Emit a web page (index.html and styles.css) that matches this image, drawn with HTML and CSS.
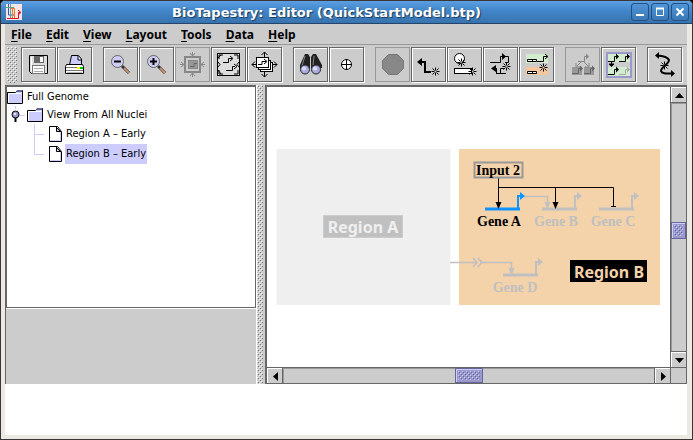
FILE: index.html
```html
<!DOCTYPE html>
<html lang="en">
<head>
    <meta charset="UTF-8">
    <meta name="viewport" content="width=device-width, initial-scale=1.0">
    <title>BioTapestry: Editor (QuickStartModel.btp)</title>
    <link rel="stylesheet" href="styles.css">
</head>
<body>
    <!-- shared shapes -->
    <svg class="defs" width="0" height="0">
        <defs>
            <path id="star" d="M0-4V-1M0 1V4M-4 0H-1M1 0H4M-3-3L-1-1M1 1L3 3M3-3L1-1M-1 1L-3 3" fill="none" stroke="#000"/>
            <g id="gene">
                <path d="M0 8.500H6.500V3.500H9" fill="none" stroke="currentColor"/>
                <path d="M8 .5L11 3.500L8 6.500Z" fill="currentColor"/>
            </g>
            <g id="bigGene">
                <path d="M0 17H35" fill="none" stroke="currentColor" stroke-width="3"/>
                <path d="M33 17V4H37" fill="none" stroke="currentColor" stroke-width="2"/>
                <path d="M35 0L40 4L35 8Z" fill="currentColor"/>
            </g>
            <path id="down" d="M-3-6H3L0 1Z"/>
            <g id="folder">
                <path d="M.5 14.500V3.500H8.500L10.500 1.500H15.500V14.500Z" fill="#ccccff" stroke="#000"/>
                <path d="M9 3H15V1H10Z" fill="#666699"/>
                <path d="M1.500 13.500V4.500H14.500" fill="none" stroke="#fff"/>
            </g>
            <g id="sheet">
                <path d="M.5.5H8.500L12.500 5.500V15.500H.5Z" fill="#fff" stroke="#000"/>
                <path d="M1.500 14.500H11.500V6.500" fill="none" stroke="#ccccff"/>
                <path d="M7.500 1V5.500H12" fill="#ccccff" stroke="#000"/>
                <path d="M7 1L12 6" stroke="#000"/>
            </g>
        </defs>
    </svg>
    <div class="window">
        <header class="titlebar">
            <svg class="logo" width="16" height="16" viewBox="0 0 16 16">
                <rect width="16" height="16" fill="#f4e4e8"/>
                <path d="M2.500 0V11H8" fill="none" stroke="#3355bb"/>
                <path d="M4.500 0V14M0 3.500H8" fill="none" stroke="#55aa77"/>
                <path d="M6.500 4V14M4 4.500H8.500V14" fill="none" stroke="#ee7733"/>
                <path d="M1 14.500H12.500V8.500H14M12 6L15 8.500L12 11" fill="none" stroke="#dd1122"/>
            </svg>
            <h1>BioTapestry: Editor (QuickStartModel.btp)</h1>
            <div class="win_buttons">
                <button aria-label="Minimize"><svg width="16" height="16"><path d="M4 11H12" stroke="#fff" stroke-width="2"/></svg></button>
                <button aria-label="Maximize"><svg width="16" height="16"><path d="M4.500 4V11.500H11.500V4" fill="none" stroke="#fff"/><path d="M4 4.500H12" stroke="#fff" stroke-width="2"/></svg></button>
                <button aria-label="Close"><svg width="16" height="16"><path d="M4.500 4.500L11.500 11.500M11.500 4.500L4.500 11.500" stroke="#fff" stroke-width="2"/></svg></button>
            </div>
        </header>
        <div class="frame">
            <nav class="menubar">
                <button><u>F</u>ile</button>
                <button><u>E</u>dit</button>
                <button><u>V</u>iew</button>
                <button><u>L</u>ayout</button>
                <button><u>T</u>ools</button>
                <button><u>D</u>ata</button>
                <button><u>H</u>elp</button>
            </nav>
            <div class="toolbar">
                <div class="grip"></div>
                <div class="group">
                    <button aria-label="Save"><svg viewBox="0 0 33 33">
                        <path d="M7.500 7.500H25.500V25.500H9.500L7.500 23.500Z" fill="#ddd" stroke="#000"/>
                        <rect x="12" y="8" width="10" height="7" fill="#666"/><rect x="18" y="9" width="3" height="5" fill="#fff"/>
                        <path d="M9.500 9V23" stroke="#fff"/>
                        <rect x="10.500" y="17.500" width="12" height="8" fill="#fff" stroke="#777"/>
                        <path d="M12 20.500H21M12 23.500H21" stroke="#aaa"/>
                    </svg></button>
                    <button aria-label="Print"><svg viewBox="0 0 33 33">
                        <path d="M11.500 17L13.500 7.500H20.500L23.500 11V17Z" fill="#ccccff" stroke="#000"/>
                        <path d="M20 8V12H23" fill="#fff" stroke="#000"/>
                        <path d="M8.500 16.500H24.500L25.500 18.500V25.500H7.500V18.500Z" fill="#fff" stroke="#000"/>
                        <path d="M8 19.500H25M8 22.500H25" stroke="#777"/>
                        <rect x="19" y="19" width="3" height="2" fill="#ff0"/><rect x="22" y="19" width="3" height="2" fill="#0c0"/>
                        <path d="M9 24.500H24" stroke="#bbb"/>
                    </svg></button>
                </div>
                <div class="group">
                    <button aria-label="Zoom out"><svg viewBox="0 0 33 33">
                        <path d="M18 18L25 25" stroke="#333" stroke-width="3"/><path d="M20 20L25 25" stroke="#cc9070" stroke-width="2"/>
                        <circle cx="13.500" cy="13.500" r="6" fill="#ccccf4" stroke="#666"/>
                        <path d="M10 13.500H17" stroke="#000" stroke-width="2"/>
                    </svg></button>
                    <button aria-label="Zoom in"><svg viewBox="0 0 33 33">
                        <path d="M18 18L25 25" stroke="#333" stroke-width="3"/><path d="M20 20L25 25" stroke="#cc9070" stroke-width="2"/>
                        <circle cx="13.500" cy="13.500" r="6" fill="#ccccf4" stroke="#666"/>
                        <path d="M10 13.500H17M13.500 10V17" stroke="#000" stroke-width="2"/>
                    </svg></button>
                    <button aria-label="Zoom to selection" disabled><svg viewBox="0 0 33 33" fill="none" stroke="#888">
                        <rect x="9" y="9" width="15" height="15" stroke-width="2"/>
                        <rect x="12.500" y="12.500" width="9" height="8" fill="#999"/>
                        <path d="M14 18.500H18V15.500H21" stroke="#666"/>
                        <path d="M16.500 4V8M14 5L16.500 8L19 5M16.500 29V25M14 28L16.500 25L19 28M4 16.500H8M5 14L8 16.500L5 19M29 16.500H25M28 14L25 16.500L28 19"/>
                    </svg></button>
                    <button aria-label="Zoom to model"><svg viewBox="0 0 33 33" fill="none" stroke="#000">
                        <rect x="5.500" y="5.500" width="22" height="22" fill="#ddd"/>
                        <path d="M11 14.500H16.500V10.500H20M18 8L21 10.500L18 13M14 22.500H20.500V18.500H23M22 16L25 18.500L22 21"/>
                        <path d="M6 10L9 7M7 11V7H11M22 7H26V11M6 22L9 26M7 22V26H11M22 26H26V22M6 14L8 16.500L6 19M27 14L25 16.500L27 19" />
                    </svg></button>
                    <button aria-label="Zoom to all models"><svg viewBox="0 0 33 33" fill="none" stroke="#000">
                        <path d="M16.500 4V29M4 16.500H29M13.500 7L16.500 4L19.500 7M13.500 26L16.500 29L19.500 26M7 13.500L4 16.500L7 19.500M26 13.500L29 16.500L26 19.500"/>
                        <rect x="12.500" y="14.500" width="12" height="9" fill="#fff"/>
                        <rect x="10.500" y="12.500" width="12" height="9" fill="#fff"/>
                        <rect x="8.500" y="9.500" width="12" height="10" fill="#fff"/>
                        <path d="M10 16.500H14V13.500H18M16 11L19 13.500L16 16"/>
                    </svg></button>
                </div>
                <div class="group">
                    <button aria-label="Search"><svg viewBox="0 0 33 33">
                        <path d="M11 6H14L16 9V20H6V17Z" fill="#222"/><path d="M19 6H22L28 17V20H17V9Z" fill="#222"/>
                        <path d="M11 8L8 18M20 8L19 17" stroke="#888"/>
                        <circle cx="11" cy="21.500" r="4.500" fill="#aaaadd" stroke="#222"/><circle cx="22" cy="21.500" r="4.500" fill="#aaaadd" stroke="#222"/>
                        <circle cx="10" cy="20.500" r="2" fill="#ddddff"/><circle cx="21" cy="20.500" r="2" fill="#ddddff"/>
                    </svg></button>
                    <button aria-label="Center"><svg viewBox="0 0 33 33">
                        <circle cx="16.500" cy="16.500" r="5" fill="#fff" stroke="#000"/><path d="M11 16.500H22M16.500 11V22" stroke="#000"/>
                    </svg></button>
                </div>
                <div class="group">
                    <button aria-label="Stop" disabled><svg viewBox="0 0 33 33">
                        <path d="M12.500 6.500H21.500L27.500 12.500V20.500L21.500 26.500H12.500L6.500 20.500V12.500Z" fill="#888" stroke="#777"/>
                    </svg></button>
                    <button aria-label="Add link"><svg viewBox="0 0 33 33">
                        <path d="M8 14H13V24H19" fill="none" stroke="#000" stroke-width="2"/><path d="M5 14L10 10V18Z"/>
                        <use href="#star" x="23.500" y="23.500"/>
                    </svg></button>
                    <button aria-label="Add node"><svg viewBox="0 0 33 33">
                        <circle cx="11.500" cy="10.500" r="5" fill="#fff" stroke="#000"/>
                        <rect x="6.500" y="20.500" width="17" height="5" fill="#fff" stroke="#000"/>
                        <use href="#star" x="13.500" y="14.500"/><use href="#star" x="24.500" y="23.500"/>
                    </svg></button>
                    <button aria-label="Add gene"><svg viewBox="0 0 33 33">
                        <path d="M6 14.500H16.500V8.500H24.500V14.500H21M9 20.500H13M12.500 20V26M16.500 26V20.500H20M12 25.500H22" fill="none" stroke="#000"/>
                        <path d="M18 5L22 8.500L18 12ZM12 17L7 20.500L12 24Z"/>
                        <use href="#star" x="22.500" y="18.500"/>
                    </svg></button>
                    <button aria-label="Add region"><svg viewBox="0 0 33 33">
                        <rect x="6" y="6" width="22" height="9" fill="#d2ecd0"/><rect x="6" y="19" width="22" height="8" fill="#f4c89c"/>
                        <path d="M7.500 11.500H16.500V13.500H7.500ZM12.500 11V14M7.500 23.500H16.500V25.500H7.500ZM12.500 23V26" fill="#fff" stroke="#000"/>
                        <path d="M17 13.500H23.500V8.500H27M25 6L28 8.500L25 11" fill="none" stroke="#000"/>
                        <use href="#star" x="23.500" y="19.500"/>
                    </svg></button>
                </div>
                <div class="group">
                    <button aria-label="Build hierarchy" disabled><svg viewBox="0 0 33 33">
                        <rect x="6" y="19" width="10" height="8" fill="#999"/><rect x="18" y="19" width="10" height="8" fill="#999"/>
                        <g color="#888"><use href="#gene" x="12" y="5"/></g>
                        <g color="#666"><use href="#gene" x="6" y="17"/><use href="#gene" x="18" y="17"/></g>
                        <path d="M15 14L11 18M18 14L22 18M10 15V19H14M23 15V19H19" fill="none" stroke="#888"/>
                    </svg></button>
                    <button aria-label="Pull down"><svg viewBox="0 0 33 33">
                        <rect x="5" y="5" width="24" height="24" fill="#d2ecd0" stroke="#9999cc" stroke-width="2"/>
                        <rect x="6" y="14" width="22" height="5" fill="#ccc"/>
                        <use href="#gene" x="6" y="5"/><use href="#gene" x="17" y="5"/><use href="#gene" x="6" y="18"/>
                        <g color="#aaa"><use href="#gene" x="17" y="18"/></g>
                        <path d="M9.500 14V18M7 16L9.500 18.500L12 16Z" stroke="#000"/>
                    </svg></button>
                </div>
                <div class="group">
                    <button aria-label="Relayout link"><svg viewBox="0 0 33 33">
                        <path d="M9 7.500C17 8 20 10 21 12C21 16 13 19 13 23C14 26 18 25.500 25 25.500" fill="none" stroke="#000" stroke-width="2"/>
                        <path d="M7 7.500L11 4V11ZM27 25.500L23 22V29Z"/>
                        <use href="#star" x="16.500" y="17.500"/>
                    </svg></button>
                </div>
            </div>
            <main class="workspace">
                <aside class="side">
                    <ul class="tree">
                        <li><svg width="16" height="16"><use href="#folder"/></svg><span>Full Genome</span></li>
                        <li class="open">
                            <svg width="20" height="18">
                                <path d="M8.500 0V3M12 9.500H18" stroke="#ccccff"/>
                                <path d="M8.500 11V16" stroke="#000" stroke-width="2"/>
                                <circle cx="8.500" cy="8.500" r="3.500" fill="#9999cc" stroke="#000"/><circle cx="8" cy="8" r="1" fill="#fff"/>
                            </svg>
                            <svg width="16" height="16"><use href="#folder"/></svg><span>View From All Nuclei</span>
                        </li>
                        <li class="leaf">
                            <svg width="42" height="20"><path d="M27.500 0V20M28 10.500H37" stroke="#ccccff"/></svg>
                            <svg width="13" height="16"><use href="#sheet"/></svg><span>Region A – Early</span>
                        </li>
                        <li class="leaf">
                            <svg width="42" height="20"><path d="M27.500 0V10.500H37" fill="none" stroke="#ccccff"/></svg>
                            <svg width="13" height="16"><use href="#sheet"/></svg><span class="selected">Region B – Early</span>
                        </li>
                    </ul>
                    <div class="overview"></div>
                </aside>
                <div class="divider"></div>
                <section class="view">
                    <div class="row">
                        <div class="canvas">
                            <svg width="403" height="280" viewBox="267 87 403 280">
                                <rect x="276.500" y="149" width="174" height="156" fill="#efefef"/>
                                <rect x="459" y="149" width="201" height="156" fill="#f4d2aa"/>
                                <rect x="323.500" y="215.500" width="79" height="22" fill="#c0c0c0" stroke="#ccc"/>
                                <text class="region" x="363" y="233" fill="#efefef">Region A</text>
                                <rect x="570" y="260" width="77" height="22"/>
                                <text class="region" x="609" y="278" fill="#f4d2aa">Region B</text>
                                <g color="#c0c0c0">
                                    <use href="#bigGene" x="542" y="192"/>
                                    <use href="#bigGene" x="599" y="192"/>
                                    <use href="#bigGene" x="503" y="258"/>
                                </g>
                                <g fill="none" stroke="#c0c0c0" stroke-width="1.500">
                                    <path d="M524 196.500H547.500V203M450 262.500H476M480 262.500H511.500V269M473 258L477 262.500L473 267M478 258L482 262.500L478 267"/>
                                </g>
                                <g fill="#c0c0c0"><use href="#down" x="547.500" y="208"/><use href="#down" x="511.500" y="274"/></g>
                                <g color="#0f94ff"><use href="#bigGene" x="485" y="192"/></g>
                                <path d="M498.500 178V204M498 187.500H613.500V206M555.500 187V204M611 206.500H616" fill="none" stroke="#000"/>
                                <use href="#down" x="498.500" y="208"/><use href="#down" x="555.500" y="208"/>
                                <rect x="474.500" y="162.500" width="48" height="15" fill="none" stroke="#999" stroke-width="2"/>
                                <text class="label" x="498" y="175">Input 2</text>
                                <text class="label" x="499" y="226">Gene A</text>
                                <g fill="#c0c0c0">
                                    <text class="label" x="556" y="226">Gene B</text>
                                    <text class="label" x="613" y="226">Gene C</text>
                                    <text class="label" x="515" y="292">Gene D</text>
                                </g>
                            </svg>
                        </div>
                        <div class="scroll vertical">
                            <button aria-label="Scroll up"><svg width="9" height="5"><path d="M0 5L4.500 0L9 5Z"/></svg></button>
                            <div class="track"><div class="thumb"></div></div>
                            <button aria-label="Scroll down"><svg width="9" height="5"><path d="M0 0L4.500 5L9 0Z"/></svg></button>
                        </div>
                    </div>
                    <div class="bottom">
                        <div class="scroll horizontal">
                            <button aria-label="Scroll left"><svg width="5" height="9"><path d="M5 0L0 4.500L5 9Z"/></svg></button>
                            <div class="track"><div class="thumb"></div></div>
                            <button aria-label="Scroll right"><svg width="5" height="9"><path d="M0 0L5 4.500L0 9Z"/></svg></button>
                        </div>
                        <div class="corner"></div>
                    </div>
                </section>
            </main>
            <div class="status"></div>
        </div>
    </div>
</body>
</html>
```
FILE: styles.css
```css
*{
    box-sizing: border-box;
}
body{
    margin: 0;
    font-family: "Noto Sans", sans-serif;
    font-size: 11px;
    color: #000;
    background-color: #000;
}
button{
    margin: 0;
    padding: 0;
    font: inherit;
    color: inherit;
    border: none;
    background: none;
}
svg{
    display: block;
    flex-shrink: 0;
}
.defs{
    position: absolute;
}
.window{
    height: 100vh;
    display: flex;
    flex-direction: column;
    border: 1px solid #393635;
    border-radius: 5px 5px 0 0;
    overflow: hidden;
    background-color: #ece9e2;
}
.titlebar{
    height: 23px;
    display: flex;
    align-items: center;
    padding: 0 3px 0 5px;
    background: linear-gradient(#5c9fe2, #4388cc 40%, #3873ae);
    border-bottom: 1px solid #24456b;
}
.titlebar h1{
    flex: 1;
    margin: 0;
    text-align: center;
    font: bold 13px "DejaVu Sans", sans-serif;
    color: #fff;
    text-shadow: 1px 1px 1px #1c3a5c;
}
.win_buttons{
    display: flex;
    gap: 2px;
}
.win_buttons button{
    width: 18px;
    height: 18px;
    border: 1px solid #23507f;
    border-radius: 3px;
    background: linear-gradient(#5095d8, #3a78b6);
}
.frame{
    flex: 1;
    display: flex;
    flex-direction: column;
    margin: 0 5px 4px 4px;
    background-color: #ccc;
}
.menubar{
    height: 21px;
    display: flex;
    gap: 14px;
    padding-left: 6px;
    font-size: 12px;
    font-weight: bold;
    border-bottom: 1px solid #999;
}
.menubar u{
    text-underline-offset: 2px;
}
.toolbar{
    height: 40px;
    display: flex;
    gap: 11px;
    padding: 2px 0 0 2px;
}
/* metal bumps: one light and one dark pixel, staggered */
.grip,
.divider,
.thumb{
    --light: #fff;
    --dark: #777;
    background-color: #ccc;
    background-image:
        conic-gradient(at 1px 1px, transparent 75%, var(--light) 0),
        conic-gradient(at 1px 1px, transparent 75%, var(--light) 0),
        conic-gradient(at 1px 1px, transparent 75%, var(--dark) 0),
        conic-gradient(at 1px 1px, transparent 75%, var(--dark) 0);
    background-size: 4px 4px;
    background-position: 0 0, 2px 2px, 1px 1px, 3px 3px;
}
.grip{
    width: 10px;
    height: 36px;
    margin-right: -7px;
}
.group{
    display: flex;
    gap: 1px;
}
.group button{
    width: 35px;
    height: 35px;
    border: 1px solid #666;
    box-shadow: 1px 1px #fff, inset 1px 1px #fff;
}
.group button:disabled{
    border-color: #999;
    box-shadow: none;
}
.workspace{
    flex: 1;
    display: flex;
    min-height: 0;
}
.side{
    width: 252px;
    display: flex;
    flex-direction: column;
    border-left: 1px solid #666;
    border-right: 1px solid #fff;
}
.tree{
    height: 223px;
    margin: 0;
    padding: 1px 0 0;
    list-style: none;
    font-family: "DejaVu Sans Condensed", "DejaVu Sans", sans-serif;
    background-color: #fff;
    border: 1px solid #666;
    border-top-width: 2px;
}
.tree li{
    height: 18px;
    display: flex;
    align-items: center;
}
.tree .leaf{
    height: 20px;
}
.tree span{
    line-height: 20px;
    padding: 0 1px;
    margin-left: 3px;
}
.tree .selected{
    background-color: #ccccff;
}
.overview{
    flex: 1;
    border-top: 1px solid #fff;
}
.divider{
    width: 8px;
    border-right: 2px solid #ccc;
}
.view{
    flex: 1;
    display: flex;
    flex-direction: column;
    min-width: 0;
    border: 1px solid #666;
    border-width: 2px 1px 1px 2px;
}
.row{
    flex: 1;
    display: flex;
    min-height: 0;
}
.canvas{
    flex: 1;
    min-width: 0;
    overflow: hidden;
    background-color: #fff;
}
.canvas text{
    text-anchor: middle;
    font-weight: bold;
}
.region{
    font-size: 16px;
}
.label{
    font-family: "Liberation Serif", serif;
    font-size: 14px;
}
.scroll{
    display: flex;
    background-color: #ccc;
}
.scroll button{
    width: 15px;
    height: 15px;
    display: flex;
    align-items: center;
    justify-content: center;
    border: 1px solid #fff;
    border-width: 1px 0 0 1px;
}
.track{
    flex: 1;
    display: flex;
    align-items: flex-start;
}
.thumb{
    --light: #ccccff;
    --dark: #666699;
    background-color: #9999cc;
    border: 1px solid #666699;
    box-shadow: inset 1px 1px #ccccff, inset 0 0 0 2px #9999cc;
}
.vertical{
    width: 16px;
    flex-direction: column;
    border-left: 1px solid #666;
}
.vertical .track{
    border: 1px solid #666;
    border-width: 1px 0;
    padding-top: 47%;
    flex-direction: column;
    justify-content: center;
    box-shadow: inset 1px 1px #999;
}
.vertical .thumb{
    width: 100%;
    height: 17px;
}
.horizontal{
    flex: 1;
    border-top: 1px solid #666;
}
.horizontal .track{
    border: 1px solid #666;
    border-width: 0 1px;
    justify-content: center;
    box-shadow: inset 1px 1px #999;
}
.horizontal .thumb{
    width: 28px;
    height: 100%;
}
.bottom{
    height: 16px;
    display: flex;
}
.corner{
    width: 16px;
    border: 1px solid #666;
    border-width: 1px 0 0 1px;
}
.status{
    height: 51px;
    background-color: #fff;
}
```
